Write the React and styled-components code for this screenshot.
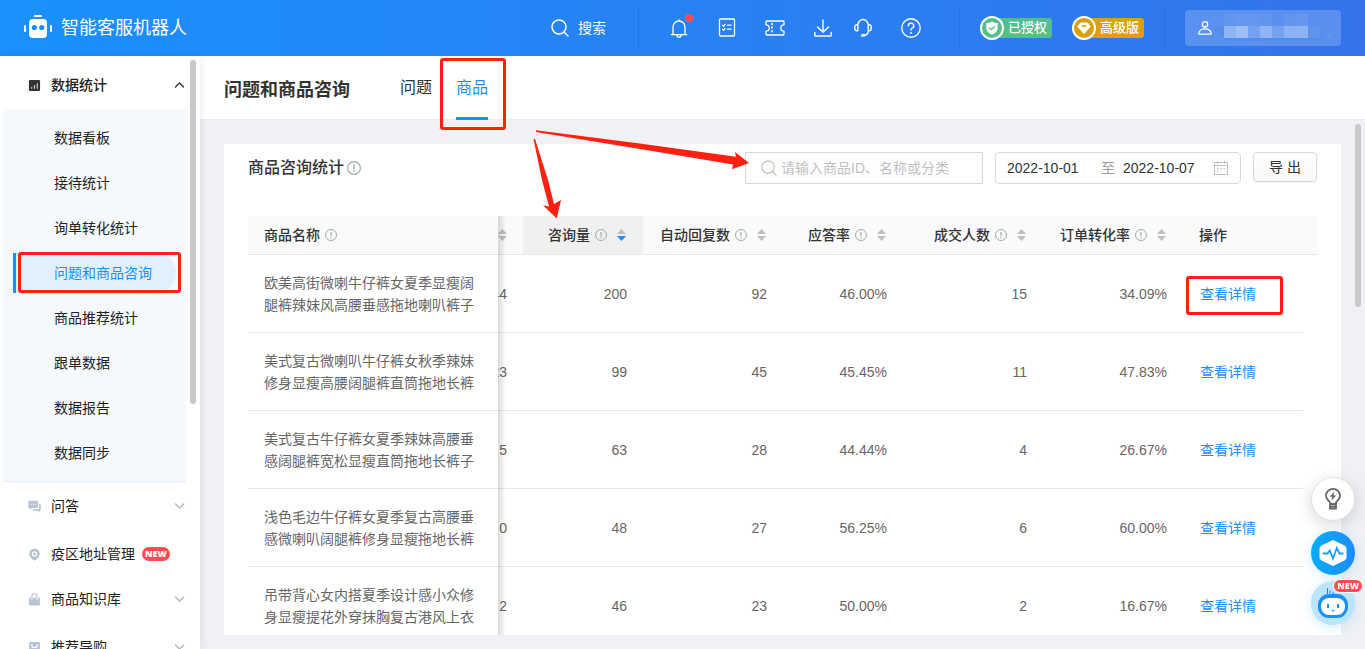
import React, { useState } from "react";
import styled, { createGlobalStyle, css } from "styled-components";

// style
const GlobalStyle = createGlobalStyle`
  * {
    box-sizing: border-box;
  }
  body {
    margin: 0;
    font-family: "Liberation Sans", "Noto Sans CJK SC", sans-serif;
    font-size: 14px;
    line-height: 22px;
    color: #333;
    background-color: #eff1f5;
  }
  button,
  input {
    font: inherit;
    color: inherit;
  }
  a {
    color: inherit;
    text-decoration: none;
  }
  svg {
    display: block;
    flex: none;
  }
`;

const Page = styled.div`
  position: relative;
  display: flex;
  flex-direction: column;
  height: 100vh;
  overflow: hidden;
`;

const TopBar = styled.header`
  display: flex;
  align-items: center;
  justify-content: space-between;
  flex: none;
  height: 56px;
  padding: 0 24px;
  color: #fff;
  background: linear-gradient(90deg, #1a90ff 0%, #3473eb 100%);
`;

const Brand = styled.a`
  display: flex;
  align-items: center;
  gap: 9px;
  font-size: 18px;
`;

const TopRight = styled.div`
  display: flex;
  align-items: center;
`;

const PlainButton = styled.button`
  display: flex;
  align-items: center;
  justify-content: center;
  padding: 0;
  border: 0;
  background: none;
  cursor: pointer;
`;

const SearchButton = styled(PlainButton)`
  gap: 9px;
  margin-right: 12px;
`;

const TopDivider = styled.span`
  width: 1px;
  height: 40px;
  margin: 0 20px;
  background-color: rgba(0, 40, 120, 0.14);
`;

const Tools = styled.div`
  display: flex;
  gap: 16px;
  padding: 0 16px 0 8px;
`;

const ToolGroup = styled.div`
  display: flex;
  gap: 24px;
`;

const Tool = styled(PlainButton)`
  position: relative;
  width: 24px;
  height: 24px;
`;

const Dot = styled.span`
  position: absolute;
  top: -2px;
  right: -2px;
  width: 8px;
  height: 8px;
  border-radius: 50%;
  background-color: #ff4d4f;
`;

const Badges = styled.div`
  display: flex;
  gap: 20px;
`;

const Badge = styled.span`
  display: flex;
  align-items: center;
  width: 72px;
  height: 20px;
  border-radius: 12px 4px 4px 12px;
  font-size: 13px;
  font-weight: 500;
  line-height: 20px;
  background-color: ${(props) => props.$color};
  svg {
    margin-right: 4px;
  }
`;

const UserBox = styled(PlainButton)`
  justify-content: flex-start;
  gap: 3px;
  width: 156px;
  height: 36px;
  padding-left: 12px;
  border-radius: 4px;
  background-color: rgba(255, 255, 255, 0.2);
`;

const Body = styled.div`
  display: flex;
  flex: 1;
  min-height: 0;
`;

const Sidebar = styled.aside`
  position: relative;
  z-index: 2;
  display: flex;
  flex: none;
  width: 200px;
  padding: 4px 4px 0 3px;
  background-color: #fff;
  box-shadow: 0 0 8px rgba(0, 0, 0, 0.1);
`;

const Menu = styled.nav`
  flex: 1;
  margin-right: 4px;
  padding-top: 1px;
  overflow: hidden;
`;

const Thumb = styled.div`
  flex: none;
  width: 6px;
  height: ${(props) => props.$length}px;
  border-radius: 3px;
  background-color: #c8c8c8;
`;

const MenuGroup = styled.a`
  display: flex;
  align-items: center;
  height: ${(props) => (props.$leaf ? 45 : 48)}px;
  padding: ${(props) => (props.$leaf ? "3px" : "0")} 1px 0 25px;
  color: #222;
  font-weight: ${(props) => (props.$open ? 500 : 400)};
  .icon {
    margin-right: 10px;
    color: ${(props) => (props.$open ? "#333" : "#b9c3d3")};
  }
  .chevron {
    margin-left: auto;
    color: ${(props) => (props.$open ? "#333" : "#b5b5b5")};
  }
`;

const NewTag = styled.span`
  padding: 0 3px;
  border-radius: 7px;
  color: #fff;
  font-family: "Open Sans", sans-serif;
  font-size: 9px;
  font-weight: 800;
  line-height: 14px;
  background-color: #ff4d4f;
  ${MenuGroup} & {
    margin-left: 7px;
  }
`;

const SubMenu = styled.ul`
  display: flex;
  flex-direction: column;
  gap: 5px;
  margin: 0;
  padding: 9px 10px 8px;
  list-style: none;
  border-bottom: 1px solid #e3edf8;
  background-color: #f5f9fc;
`;

const SubItem = styled.li`
  position: relative;
  a {
    display: block;
    height: 40px;
    padding-left: 41px;
    line-height: 40px;
    color: #222;
  }
  ${(props) =>
    props.$active &&
    css`
      a {
        padding-left: 38px;
        border-left: 3px solid #1890ff;
        border-radius: 0 20px 20px 0;
        color: #1890ff;
        background-color: #e2effd;
      }
    `}
`;

const Mark = styled.span`
  position: absolute;
  z-index: 3;
  inset: ${(props) => props.$inset};
  border: 3px solid #ff2012;
  border-radius: 3px;
  pointer-events: none;
`;

const Main = styled.main`
  display: flex;
  flex: 1;
  flex-direction: column;
  min-width: 0;
`;

const PageHead = styled.div`
  position: relative;
  z-index: 1;
  display: flex;
  flex: none;
  height: 64px;
  padding: 0 24px;
  border-bottom: 1px solid #ebecef;
  background-color: #fff;
  h1 {
    margin: 0 50px 0 0;
    font-size: 18px;
    font-weight: 700;
    line-height: 68px;
  }
`;

const Tabs = styled.div`
  display: flex;
  gap: 24px;
  height: 64px;
`;

const Tab = styled.button`
  position: relative;
  height: 64px;
  padding: 2px 0 0;
  border: 0;
  border-bottom: 3px solid ${(props) => (props.$active ? "#1890ff" : "transparent")};
  font-size: 16px;
  color: ${(props) => (props.$active ? "#1890ff" : "#333")};
  background: none;
  cursor: pointer;
`;

const Content = styled.div`
  display: flex;
  flex: 1;
  gap: 14px;
  min-height: 0;
  padding: 4px 4px 14px 24px;
`;

const Card = styled.section`
  flex: 1;
  min-width: 0;
  margin-top: 20px;
  padding: 8px 24px 0;
  overflow: hidden;
  background-color: #fff;
`;

const Toolbar = styled.div`
  display: flex;
  align-items: flex-start;
  gap: 12px;
  margin-bottom: 32px;
  h2 {
    display: flex;
    align-items: center;
    gap: 3px;
    margin: 0 auto 0 0;
    font-size: 16px;
    font-weight: 500;
    line-height: 32px;
  }
`;

const SearchBox = styled.label`
  display: flex;
  align-items: center;
  gap: 4px;
  width: 238px;
  height: 32px;
  padding: 0 15px;
  border: 1px solid #d9d9d9;
  color: #bfbfbf;
  input {
    flex: 1;
    min-width: 0;
    padding: 0;
    border: 0;
    outline: 0;
    color: #333;
    background: none;
  }
  input::placeholder {
    color: #bfbfbf;
  }
`;

const DateRange = styled.div`
  display: flex;
  align-items: center;
  gap: 8px;
  width: 246px;
  height: 32px;
  padding: 0 12px 0 11px;
  border: 1px solid #d9d9d9;
  border-radius: 4px;
  color: #999;
  input {
    width: 86px;
    min-width: 0;
    padding: 0;
    border: 0;
    outline: 0;
    color: #333;
    background: none;
  }
  input:last-of-type {
    flex: 1;
  }
`;

const ExportButton = styled.button`
  width: 64px;
  height: 30px;
  padding: 0;
  border: 1px solid #d9d9d9;
  border-radius: 4px;
  background: linear-gradient(#fff, #f7f7f7);
  box-shadow: 0 1px 1px rgba(0, 0, 0, 0.06);
  cursor: pointer;
`;

const Table = styled.table`
  width: 100%;
  table-layout: fixed;
  border-collapse: separate;
  border-spacing: 0;
  th {
    height: 39px;
    padding: 0 17px 0 16px;
    border-bottom: 1px solid #e8e8e8;
    font-weight: 500;
    text-align: left;
    background-color: #fafafa;
  }
  td {
    height: 78px;
    padding: 0 16px;
    border-bottom: 1px solid #e8e8e8;
    color: #666;
    text-align: right;
    background-color: #fff;
  }
  td:last-child {
    border-bottom: 0;
  }
  th.sorted {
    background-color: #f0f0f0;
  }
  th.narrow,
  td.narrow {
    padding: 0 16px 0 0;
    overflow: hidden;
  }
  th.fixed,
  td.fixed {
    position: sticky;
    left: 0;
    z-index: 1;
    text-align: left;
  }
  /* shade to the right of the pinned column */
  th.fixed::after,
  td.fixed::after {
    content: "";
    position: absolute;
    top: 0;
    right: -8px;
    bottom: -1px;
    width: 8px;
    background: linear-gradient(90deg, rgba(0, 0, 0, 0.14), transparent);
    pointer-events: none;
  }
  td.action {
    padding-left: 17px;
    text-align: left;
  }
`;

const HeadLabel = styled.span`
  display: flex;
  align-items: center;
  justify-content: ${(props) => (props.$start ? "flex-start" : "flex-end")};
  gap: 5px;
`;

const SortButton = styled(PlainButton)`
  margin-left: 5px;
`;

const Clipped = styled.span`
  display: flex;
  justify-content: flex-end;
`;

const DetailLink = styled.a`
  position: relative;
  display: inline-block;
  color: #1890ff;
`;

const Floating = styled.div`
  position: fixed;
  right: 10px;
  bottom: 24px;
  z-index: 4;
  display: flex;
  flex-direction: column;
  gap: 6px;
`;

const Round = styled(PlainButton)`
  position: relative;
  width: 44px;
  height: 44px;
  border-radius: 50%;
  background: ${(props) => props.$fill};
  box-shadow: ${(props) => props.$shadow};
  &:first-child {
    margin-bottom: 4px;
    border: 1px solid #e2e2e2;
  }
  ${NewTag} {
    position: absolute;
    top: -2px;
    right: -8px;
    border: 1px solid #fff;
    line-height: 12px;
    border-radius: 8px;
  }
`;

const Arrows = styled.svg`
  position: absolute;
  top: 0;
  left: 0;
  z-index: 5;
  pointer-events: none;
`;

// icons
const line = {
  fill: "none",
  stroke: "currentColor",
  strokeLinecap: "round",
  strokeLinejoin: "round",
};

const RobotLogo = () => (
  <svg width="28" height="28" viewBox="0 0 28 28" fill="#fff">
    <rect x="10" y="1" width="8" height="2" rx="1" />
    <rect x="5" y="5" width="18" height="19" rx="4" />
    <rect x="0" y="11" width="2" height="7" rx="1" />
    <rect x="26" y="11" width="2" height="7" rx="1" />
    <circle cx="10.3" cy="13.5" r="2.6" fill="#1f8cfd" />
    <circle cx="17.8" cy="13.5" r="2.6" fill="#1f8cfd" />
  </svg>
);

const SearchIcon = ({ size, width }) => (
  <svg width={size} height={size} viewBox="0 0 18 18" {...line} strokeWidth={width}>
    <circle cx="8" cy="8" r="7" />
    <path d="M13 13l4 4" />
  </svg>
);

const BellIcon = () => (
  <svg width="20" height="20" viewBox="0 0 20 20" {...line} strokeWidth="1.3">
    <path d="M2.3 16.7h15.4M4 16.5V9a6 6 0 0 1 12 0v7.5M10 3V1.8M8 17.5a2 1.7 0 0 0 4 0" />
  </svg>
);

const ListIcon = () => (
  <svg width="18" height="20" viewBox="0 0 18 20" {...line} strokeWidth="1.3">
    <rect x="1.5" y="1" width="15" height="17" rx="1" />
    <path d="M4.5 7.2l1 1L7 6.5M9.5 7.2H13M4.5 11.2l1 1L7 10.5M9.5 11.2H13" />
  </svg>
);

const TicketIcon = () => (
  <svg width="20" height="18" viewBox="0 0 20 18" {...line} strokeWidth="1.3">
    <path d="M1.8 2h16.4a.8.8 0 0 1 .8.8v3a3.2 3.2 0 0 0 0 6.4v3a.8.8 0 0 1-.8.8H1.8a.8.8 0 0 1-.8-.8v-3a3.2 3.2 0 0 0 0-6.4v-3a.8.8 0 0 1 .8-.8z" />
    <path d="M7 4.5v10" strokeWidth="1.6" strokeDasharray="1 2.6" />
  </svg>
);

const DownloadIcon = () => (
  <svg width="18" height="18" viewBox="0 0 18 18" {...line} strokeWidth="1.4">
    <path d="M9 1v12M3.5 8L9 13.3 14.5 8M.8 13.5v2.7c0 .6.3.8.8.8h14.8c.5 0 .8-.2.8-.8v-2.7" />
  </svg>
);

const HeadsetIcon = () => (
  <svg width="18" height="20" viewBox="0 0 18 20" {...line} strokeWidth="1.4">
    <path d="M3.8 12.8V7.3a5.2 5.8 0 0 1 10.4 0v5M3.8 6.7H3a2.2 2.2 0 0 0-2.2 2.2v1.7a2.2 2.2 0 0 0 2.2 2.2h.8M14.2 6.7h.8a2.2 2.2 0 0 1 2.2 2.2v1.7a2.2 2.2 0 0 1-2.2 2.2h-.8M14.2 12.8c0 2.5-1.5 4.3-4 4.4" />
    <path d="M8.3 17.4h2" strokeWidth="2.6" />
  </svg>
);

const HelpIcon = () => (
  <svg width="20" height="20" viewBox="0 0 18 18" {...line} strokeWidth="1.2">
    <circle cx="9" cy="9" r="8.3" />
    <path d="M6.5 7a2.5 2.3 0 1 1 3.7 2C9.3 9.5 9 9.9 9 10.8" />
    <path d="M9 13.3v.2" strokeWidth="1.6" />
  </svg>
);

const ShieldIcon = () => (
  <svg width="24" height="24" viewBox="0 0 24 24">
    <circle cx="12" cy="12" r="11" fill="#52c08a" stroke="#fff" strokeWidth="2" />
    <path d="M12 5.5c1.8 1.2 3.5 1.6 5.7 1.6v5c0 3.2-2.5 5.1-5.7 6.6-3.2-1.5-5.7-3.4-5.7-6.6v-5c2.2 0 3.9-.4 5.7-1.6z" fill="#fff" />
    <path d="M9.3 11.7l2 2 3.6-3.5" fill="none" stroke="#52c08a" strokeWidth="1.3" />
  </svg>
);

const DiamondIcon = () => (
  <svg width="24" height="24" viewBox="0 0 24 24">
    <circle cx="12" cy="12" r="11" fill="#dda00b" stroke="#fff" strokeWidth="2" />
    <path d="M8.5 7h7l2.7 3.7L12 17.5l-6.2-6.8z" fill="#fff" stroke="#fff" strokeLinejoin="round" />
    <path d="M10 10h4" stroke="#dda00b" strokeWidth="1.3" strokeLinecap="round" />
  </svg>
);

const UserIcon = () => (
  <svg width="16" height="16" viewBox="0 0 16 16" {...line} strokeWidth="1.3">
    <circle cx="8" cy="4.3" r="2.7" />
    <path d="M1.8 13.4c0-2.5 2.5-4.5 6.2-4.5s6.2 2 6.2 4.5c0 .5-.3.8-.8.8H2.6c-.5 0-.8-.3-.8-.8z" />
  </svg>
);

// masked account name: [x, y, opacity]
const mask = [
  [8, 0, 0.05], [20, 0, 0.07], [32, 0, 0.07], [44, 0, 0.04], [68, 0, 0.05], [80, 0, 0.07],
  [8, 12, 0.36], [20, 12, 0.44], [32, 12, 0.2], [44, 12, 0.36], [56, 12, 0.2],
  [68, 12, 0.34], [80, 12, 0.34], [92, 12, 0.08], [104, 12, 0.04],
];

const MaskedName = () => (
  <svg width="116" height="28" viewBox="0 0 116 28">
    <path d="M0 12h116q-2 13-14 14L14 27Q2 24 0 12z" fill="#4a86ec" opacity=".45" />
    {mask.map(([x, y, opacity]) => (
      <rect key={`${x}-${y}`} x={x} y={y} width="12" height="12" fill="#fff" opacity={opacity} />
    ))}
  </svg>
);

const Chevron = ({ up }) => (
  <svg className="chevron" width="11" height="8" viewBox="0 0 11 8" {...line} strokeWidth="1.4">
    <path d={up ? "M1.5 6l4-4 4 4" : "M1.5 2l4 4 4-4"} />
  </svg>
);

const menuIcons = {
  stats: (
    <>
      <rect x="1" y="1" width="12" height="12" rx="1.5" />
      <path d="M4 10.5V8.5M7 10.5v-4M10 10.5v-6" stroke="#fff" strokeWidth="1.2" opacity=".8" />
    </>
  ),
  chat: (
    <>
      <path d="M1.5.8h8.3c.7 0 1.2.5 1.2 1.2v5.5c0 .7-.5 1.2-1.2 1.2H4.5L2.3 10.5V8.7h-.8C.8 8.7.3 8.2.3 7.5V2C.3 1.3.8.8 1.5.8z" />
      <path d="M12 4h.5c.7 0 1.2.5 1.2 1.2v5.3c0 .7-.5 1.2-1.2 1.2v1.5l-2-1.5H6.5c-.7 0-1.2-.5-1.2-1.2v-.8h5c1 0 1.7-.7 1.7-1.7z" />
      <path d="M3 4.5h1M5.2 4.5h1M7.4 4.5h1" stroke="#fff" strokeWidth="1.1" />
    </>
  ),
  pin: (
    <>
      <path d="M7 .6a5.7 5.7 0 0 1 5.7 5.7c0 3.2-2.5 5.5-5.7 7.3-3.2-1.8-5.7-4.1-5.7-7.3A5.7 5.7 0 0 1 7 .6z" />
      <circle cx="7" cy="6.4" r="2.2" fill="none" stroke="#fff" strokeWidth="1.2" />
    </>
  ),
  bag: (
    <>
      <path d="M1.2 5h11.6v7.5c0 .6-.4 1-1 1H2.2c-.6 0-1-.4-1-1z" />
      <path d="M4.2 5V3.800a2.800 3 0 0 1 5.600 0V5" fill="none" stroke="currentColor" strokeWidth="1.3" />
      <path d="M4.2 5v2.800M9.800 5v2.800" stroke="#fff" strokeWidth="1.1" />
    </>
  ),
  guide: (
    <>
      <rect x="1.2" y="1" width="11.6" height="12" rx="1" />
      <path d="M4 3.5v1a3 2.5 0 0 0 6 0v-1" fill="none" stroke="#fff" strokeWidth="1.3" />
    </>
  ),
};

const MenuIcon = ({ name }) => (
  <svg className="icon" width="13" height="13" viewBox="0 0 14 14" fill="currentColor">
    {menuIcons[name]}
  </svg>
);

const InfoIcon = ({ size = 12 }) => (
  <svg width={size} height={size} viewBox="0 0 12 12" fill="none" stroke="#9facaa">
    <circle cx="6" cy="6" r="5.5" />
    <path d="M6 3v4M6 8v1.2" strokeWidth="1.2" />
  </svg>
);

const SortIcon = ({ down }) => (
  <svg width="9" height="14" viewBox="0 0 9 14" fill="#bfbfbf">
    <path d="M4.5 1L9 6H0z" />
    <path d="M4.5 13L9 8H0z" fill={down ? "#1890ff" : "#bfbfbf"} />
  </svg>
);

const CalendarIcon = () => (
  <svg width="14" height="16" viewBox="0 0 14 16" fill="none" stroke="#bfbfbf">
    <path d="M.5 2.5h13v12H.5zM.5 5.5h13M3.5 1v3M10.5 1v3" />
    <path d="M3 8.5h1.5M6.2 8.5h1.5M9.5 8.5H11M3 11.5h1.5" />
  </svg>
);

const BulbIcon = () => (
  <svg width="18" height="24" viewBox="0 0 18 24" fill="none" stroke="#666" strokeWidth="1.8">
    <path d="M6 17v-1.5C5.5 14 2 12.5 2 8.8a7 7 0 0 1 14 0c0 3.7-3.5 5.2-4 6.7V17zM6 17v4.5h6V17M6 19.3h6" />
    <path d="M10.5 4.5L5.7 9.8h2.7l-.9 4 4.7-5.3H9.6z" fill="#666" stroke="none" />
  </svg>
);

const PulseIcon = () => (
  <svg width="28" height="28" viewBox="0 0 28 28">
    <path d="M14 1.5l11.5 5.5q1.5.8 1.5 2v10q0 1.2-1.5 2L14 26.500 2.500 21Q1 20.200 1 19V9q0-1.200 1.500-2z" fill="#fff" stroke="#fff" strokeLinejoin="round" />
    <path d="M3.500 14.500h5l2.300-3 3.200 8 3.800-10.500 2.700 5.500h4" fill="none" stroke="#1c9bff" strokeWidth="1.8" />
  </svg>
);

const BotIcon = () => (
  <svg width="44" height="44" viewBox="0 0 44 44">
    <path d="M16.5 7v6M19 9.5v3M28 8v3" stroke="#1c86e8" strokeWidth="1" />
    <path d="M19 14.5c2-.5 2.5-2 3-4 .5 2 1.500 3.500 4 4z" fill="#1c86e8" />
    <rect x="7" y="13" width="30" height="24" rx="11" fill="#1d8df8" />
    <rect x="10" y="17" width="24" height="17" rx="8" fill="#fff" />
    <path d="M17 23v4M27 23v4" stroke="#1d8df8" strokeWidth="2" />
    <path d="M20.5 29h3l-1.5 2z" fill="#1d8df8" />
  </svg>
);

// data
const subMenu = [
  "数据看板",
  "接待统计",
  "询单转化统计",
  "问题和商品咨询",
  "商品推荐统计",
  "跟单数据",
  "数据报告",
  "数据同步",
];

const groups = [
  { name: "问答", icon: "chat" },
  { name: "疫区地址管理", icon: "pin", leaf: true },
  { name: "商品知识库", icon: "bag" },
  { name: "推荐导购", icon: "guide" },
];

const columns = [
  { name: "咨询量", width: 120, sorted: true },
  { name: "自动回复数", width: 140 },
  { name: "应答率", width: 120 },
  { name: "成交人数", width: 140 },
  { name: "订单转化率", width: 140 },
];

const rows = [
  {
    name: "欧美高街微喇牛仔裤女夏季显瘦阔腿裤辣妹风高腰垂感拖地喇叭裤子",
    people: "44",
    values: ["200", "92", "46.00%", "15", "34.09%"],
  },
  {
    name: "美式复古微喇叭牛仔裤女秋季辣妹修身显瘦高腰阔腿裤直筒拖地长裤",
    people: "23",
    values: ["99", "45", "45.45%", "11", "47.83%"],
  },
  {
    name: "美式复古牛仔裤女夏季辣妹高腰垂感阔腿裤宽松显瘦直筒拖地长裤子",
    people: "5",
    values: ["63", "28", "44.44%", "4", "26.67%"],
  },
  {
    name: "浅色毛边牛仔裤女夏季复古高腰垂感微喇叭阔腿裤修身显瘦拖地长裤",
    people: "0",
    values: ["48", "27", "56.25%", "6", "60.00%"],
  },
  {
    name: "吊带背心女内搭夏季设计感小众修身显瘦提花外穿抹胸复古港风上衣",
    people: "2",
    values: ["46", "23", "50.00%", "2", "16.67%"],
  },
];

const Header = () => (
  <TopBar>
    <Brand href="#home">
      <RobotLogo />
      智能客服机器人
    </Brand>
    <TopRight>
      <SearchButton>
        <SearchIcon size={18} width={1.5} />
        搜索
      </SearchButton>
      <TopDivider />
      <Tools>
        <ToolGroup>
          <Tool aria-label="通知">
            <BellIcon />
            <Dot />
          </Tool>
          <Tool aria-label="任务">
            <ListIcon />
          </Tool>
          <Tool aria-label="卡券">
            <TicketIcon />
          </Tool>
          <Tool aria-label="下载">
            <DownloadIcon />
          </Tool>
        </ToolGroup>
        <ToolGroup>
          <Tool aria-label="客服">
            <HeadsetIcon />
          </Tool>
          <Tool aria-label="帮助">
            <HelpIcon />
          </Tool>
        </ToolGroup>
      </Tools>
      <TopDivider />
      <Badges>
        <Badge $color="#52c08a">
          <ShieldIcon />
          已授权
        </Badge>
        <Badge $color="#dda00b">
          <DiamondIcon />
          高级版
        </Badge>
      </Badges>
      <TopDivider />
      <UserBox aria-label="账号">
        <UserIcon />
        <MaskedName />
      </UserBox>
    </TopRight>
  </TopBar>
);

const SideMenu = () => (
  <Sidebar>
    <Menu>
      <MenuGroup href="#stats" $open>
        <MenuIcon name="stats" />
        数据统计
        <Chevron up />
      </MenuGroup>
      <SubMenu>
        {subMenu.map((name) => {
          const active = name === "问题和商品咨询";
          return (
            <SubItem key={name} $active={active}>
              <a href="#stats">{name}</a>
              {active && <Mark $inset="-1px -5px 0 5px" />}
            </SubItem>
          );
        })}
      </SubMenu>
      {groups.map((group) => (
        <MenuGroup key={group.name} href="#group" $leaf={group.leaf}>
          <MenuIcon name={group.icon} />
          {group.name}
          {group.leaf ? <NewTag>NEW</NewTag> : <Chevron />}
        </MenuGroup>
      ))}
    </Menu>
    <Thumb $length={344} />
  </Sidebar>
);

const ProductTable = () => (
  <Table>
    <colgroup>
      <col width="250" />
      <col width="25" />
      {columns.map((column) => (
        <col key={column.name} width={column.width} />
      ))}
      <col />
      <col width="14" />
    </colgroup>
    <thead>
      <tr>
        <th className="fixed">
          <HeadLabel $start>
            商品名称
            <InfoIcon />
          </HeadLabel>
        </th>
        <th className="narrow">
          <Clipped>
            <SortIcon />
          </Clipped>
        </th>
        {columns.map((column) => (
          <th key={column.name} className={column.sorted ? "sorted" : ""}>
            <HeadLabel>
              {column.name}
              <InfoIcon />
              <SortButton aria-label={`${column.name}排序`}>
                <SortIcon down={column.sorted} />
              </SortButton>
            </HeadLabel>
          </th>
        ))}
        <th>操作</th>
        <th />
      </tr>
    </thead>
    <tbody>
      {rows.map((row, index) => (
        <tr key={row.name}>
          <td className="fixed">{row.name}</td>
          <td className="narrow">
            <Clipped>{row.people}</Clipped>
          </td>
          {row.values.map((value, i) => (
            <td key={columns[i].name}>{value}</td>
          ))}
          <td className="action">
            <DetailLink href="#detail">
              查看详情
              {index === 0 && <Mark $inset="-7px -27px -10px -14px" />}
            </DetailLink>
          </td>
          <td />
        </tr>
      ))}
    </tbody>
  </Table>
);

const App = () => {
  // state
  const [keyword, setKeyword] = useState("");
  const [start, setStart] = useState("2022-10-01");
  const [end, setEnd] = useState("2022-10-07");

  return (
    <Page>
      <GlobalStyle />
      <Header />
      <Body>
        <SideMenu />
        <Main>
          <PageHead>
            <h1>问题和商品咨询</h1>
            <Tabs>
              <Tab>问题</Tab>
              <Tab $active>
                商品
                <Mark $inset="2px -18px -13px -16px" />
              </Tab>
            </Tabs>
          </PageHead>
          <Content>
            <Card>
              <Toolbar>
                <h2>
                  商品咨询统计
                  <InfoIcon size={14} />
                </h2>
                <SearchBox>
                  <SearchIcon size={16} width={1.3} />
                  <input
                    type="text"
                    aria-label="搜索商品"
                    placeholder="请输入商品ID、名称或分类"
                    value={keyword}
                    onChange={(e) => setKeyword(e.target.value)}
                  />
                </SearchBox>
                <DateRange>
                  <input
                    aria-label="开始日期"
                    value={start}
                    onChange={(e) => setStart(e.target.value)}
                  />
                  至
                  <input
                    aria-label="结束日期"
                    value={end}
                    onChange={(e) => setEnd(e.target.value)}
                  />
                  <CalendarIcon />
                </DateRange>
                <ExportButton>导 出</ExportButton>
              </Toolbar>
              <ProductTable />
            </Card>
            <Thumb $length={183} />
          </Content>
        </Main>
      </Body>
      <Floating>
        <Round aria-label="建议" $fill="#fff" $shadow="0 4px 16px rgba(0, 0, 0, 0.16)">
          <BulbIcon />
        </Round>
        <Round
          aria-label="诊断"
          $fill="linear-gradient(90deg, #06adf7, #1b8dff)"
          $shadow="0 2px 12px rgba(24, 144, 255, 0.2)"
        >
          <PulseIcon />
        </Round>
        <Round aria-label="助手" $fill="#bbe5ff" $shadow="0 2px 12px rgba(24, 144, 255, 0.2)">
          <BotIcon />
          <NewTag>NEW</NewTag>
        </Round>
      </Floating>
      <Arrows width="760" height="230" viewBox="0 0 760 230" fill="#ff2012">
        <path d="M536 130.300L640 143.500 736 156.700 735 152 749 163 732 169.300 733 164.500 640 149 536 132z" />
        <path d="M533.500 139h1.500L548 180l6 24 7-4-4.300 18.500L543 205.300l6 1.200L542 180z" />
      </Arrows>
    </Page>
  );
};

export default App;
